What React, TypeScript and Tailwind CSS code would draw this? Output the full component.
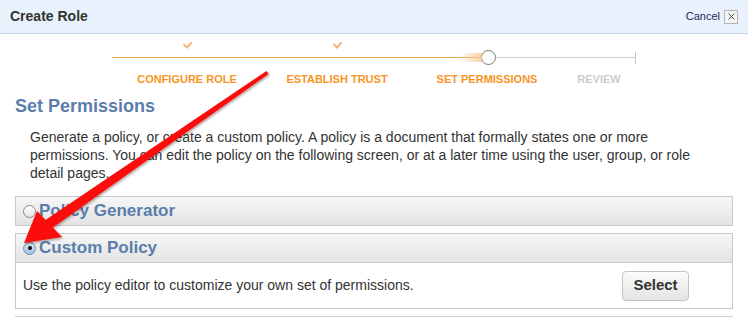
import { X } from "lucide-react";

const font = { fontFamily: '"Liberation Sans", Arial, sans-serif' };

function Check() {
  return (
    <svg width="9" height="7" viewBox="0 0 9 7">
      <path d="M1 2.5 L4 5.5 L8 1" fill="none" stroke="#f2b57c" strokeWidth="2" strokeLinecap="round" />
    </svg>
  );
}

function Radio({ checked }: { checked?: boolean }) {
  return (
    <span
      className={
        "flex h-[13px] w-[13px] shrink-0 items-center justify-center rounded-full border " +
        (checked
          ? "border-[#6f8db5] bg-gradient-to-b from-[#dbe9f8] to-[#9fc1e6]"
          : "border-[#8a8a8a] bg-gradient-to-b from-[#ffffff] to-[#e4e4e4]")
      }
    >
      {checked && <span className="h-[4px] w-[4px] rounded-full bg-[#111]" />}
    </span>
  );
}

function Arrow() {
  return (
    <svg className="pointer-events-none absolute left-0 top-0" width="748" height="331">
      <defs>
        <filter id="sh" x="-10%" y="-10%" width="120%" height="120%">
          <feDropShadow dx="1" dy="1.5" stdDeviation="1" floodColor="#000" floodOpacity="0.35" />
        </filter>
      </defs>
      <g filter="url(#sh)" fill="#fb0d07">
        <polygon points="268.5,74 266.5,71 44,221 50,229.5" />
        <polygon points="24,243 37,211 62,237" />
      </g>
    </svg>
  );
}

export default function App() {
  return (
    <div className="relative h-[331px] w-[748px] overflow-hidden bg-white text-[#333]" style={font}>
      <div className="flex h-[34px] items-center justify-between border-b border-[#c7d4e6] bg-[#e9f1fc] pl-[10px] pr-[10px]">
        <span className="text-[14px] font-bold text-[#333]">Create Role</span>
        <div className="flex items-center gap-[4px]">
          <span className="text-[11px] text-[#1b2b5c]">Cancel</span>
          <span className="flex h-[14px] w-[14px] items-center justify-center border border-[#b5b5b5] bg-[#f4f4f4]">
            <X size={11} strokeWidth={2} color="#444" />
          </span>
        </div>
      </div>

      <div className="ml-[112px] w-[524px] pt-[8px]">
        <div className="grid h-[8px] grid-cols-[150px_150px_150px_74px]">
          <div className="flex justify-center"><Check /></div>
          <div className="flex justify-center"><Check /></div>
          <div />
          <div />
        </div>
        <div className="flex h-[15px] items-center">
          <div className="h-px w-[369px] bg-[#f0a95c]" />
          <div className="relative h-[15px] w-[15px] shrink-0 rounded-full border-[1.5px] border-[#7a7a7a] bg-white">
            <div className="absolute right-[13px] top-[2px] h-[9px] w-[22px] bg-gradient-to-r from-[#fde6cc]/0 to-[#f9c38a]/80" />
          </div>
          <div className="h-px flex-1 bg-[#cfcfcf]" />
          <div className="h-[12px] w-px bg-[#c4c4c4]" />
        </div>
        <div className="mt-[7px] grid grid-cols-[150px_150px_150px_74px] text-center text-[11px] font-bold leading-[14px]">
          <span className="text-[#f7941f]">CONFIGURE ROLE</span>
          <span className="text-[#f7941f]">ESTABLISH TRUST</span>
          <span className="text-[#f7941f]">SET PERMISSIONS</span>
          <span className="text-[#cccccc]">REVIEW</span>
        </div>
      </div>

      <div className="px-[15px]">
        <h2 className="mt-[9px] text-[18px] font-bold leading-[22px] text-[#5a7dab]">Set Permissions</h2>
        <p className="mt-[11px] pl-[15px] text-[14px] leading-[18px] text-[#333]">
          Generate a policy, or create a custom policy. A policy is a document that formally states one or more
          <br />
          permissions. You can edit the policy on the following screen, or at a later time using the user, group, or role
          <br />
          detail pages.
        </p>

        <div className="mt-[14px] flex h-[30px] items-center gap-[3px] border border-[#c9c9c9] bg-gradient-to-b from-[#f7f7f7] to-[#e3e3e3] pl-[7px]">
          <Radio />
          <span className="text-[17px] font-bold text-[#5a7dab]">Policy Generator</span>
        </div>

        <div className="mt-[7px] border border-[#c9c9c9]">
          <div className="flex h-[29px] items-center gap-[3px] border-b border-[#c9c9c9] bg-gradient-to-b from-[#f7f7f7] to-[#e3e3e3] pl-[7px]">
            <Radio checked />
            <span className="text-[17px] font-bold text-[#5a7dab]">Custom Policy</span>
          </div>
          <div className="flex h-[45px] items-center justify-between pl-[7px] pr-[43px]">
            <span className="text-[14px] text-[#333]">Use the policy editor to customize your own set of permissions.</span>
            <button className="h-[30px] w-[67px] rounded-[4px] border border-[#c4c4c4] bg-gradient-to-b from-[#fbfbfb] to-[#e4e4e4] text-[15px] font-bold text-[#333]">
              Select
            </button>
          </div>
        </div>

        <div className="mt-[7px] h-px bg-[#cfcfcf]" />
      </div>

      <Arrow />
    </div>
  );
}
